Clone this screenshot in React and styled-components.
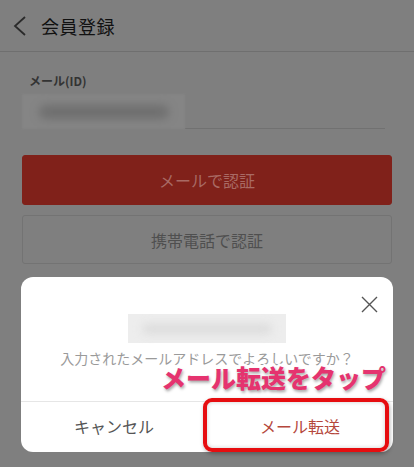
import React from 'react'
import styled, { createGlobalStyle } from 'styled-components'

const Global = createGlobalStyle`
  html, body {
    margin: 0;
    padding: 0;
    background: #7f7f7f;
  }
  body {
    font-family: "Noto Sans CJK JP", "Noto Sans", sans-serif;
  }
`

const Page = styled.div`
  position: relative;
  width: 414px;
  height: 467px;
  overflow: hidden;
  background: #7f7f7f;
`

const Header = styled.div`
  height: 52px;
  display: flex;
  align-items: center;
  gap: 12px;
  padding-left: 13px;
  border-bottom: 1px solid #6f6f6f;
  box-sizing: border-box;
`

const Title = styled.div`
  font-size: 18px;
  color: #111;
  letter-spacing: 0.5px;
`

const Form = styled.div`
  padding: 22px 22px 0;
`

const Label = styled.div`
  font-size: 12px;
  font-weight: 700;
  color: #333;
  padding-left: 7px;
  line-height: 14px;
`

const InputRow = styled.div`
  display: flex;
  align-items: flex-end;
  margin-top: 6px;
  height: 35px;
  padding-right: 7px;
`

const Blurred = styled.div`
  width: 163px;
  height: 35px;
  background: #858585;
  display: flex;
  align-items: center;
  justify-content: center;
  flex-shrink: 0;
  filter: blur(1px);
`

const Blob = styled.div`
  width: ${p => p.$w}px;
  height: ${p => p.$h}px;
  border-radius: 10px;
  background: ${p => p.$c};
  filter: blur(4px);
`

const Underline = styled.div`
  flex: 1;
  border-bottom: 1px solid #717171;
`

const Button = styled.div`
  margin-top: ${p => p.$mt}px;
  height: ${p => p.$h}px;
  border-radius: 3px;
  box-sizing: border-box;
  display: flex;
  align-items: center;
  justify-content: center;
  font-size: 16px;
  background: ${p => (p.$primary ? '#80211a' : '#7f7f7f')};
  border: 1px solid ${p => (p.$primary ? '#80211a' : '#737373')};
  color: ${p => (p.$primary ? '#a96a64' : '#4f4f4f')};
`

const Modal = styled.div`
  position: absolute;
  left: 21px;
  top: 277px;
  width: 372px;
  height: 175px;
  background: #fff;
  border-radius: 12px;
  display: flex;
  flex-direction: column;
`

const Close = styled.div`
  position: absolute;
  right: 15px;
  top: 17px;
  width: 17px;
  height: 17px;
`

const ModalBody = styled.div`
  height: 125px;
  display: flex;
  flex-direction: column;
  align-items: center;
  padding-top: 37px;
  box-sizing: border-box;
  border-bottom: 1px solid #e6e6e6;
`

const ModalBlur = styled.div`
  width: 158px;
  height: 29px;
  background: #ededed;
  display: flex;
  align-items: center;
  justify-content: center;
`

const Question = styled.div`
  margin-top: 6px;
  font-size: 14px;
  color: #9a9a9a;
  line-height: 18px;
`

const Actions = styled.div`
  flex: 1;
  display: grid;
  grid-template-columns: 1fr 1fr;
`

const Action = styled.div`
  display: flex;
  align-items: center;
  justify-content: center;
  font-size: 16px;
  color: ${p => (p.$accent ? '#b5473c' : '#555')};
  padding-bottom: 2px;
`

const Callout = styled.div`
  position: absolute;
  right: 28px;
  top: 359px;
  font-size: 25px;
  font-weight: 900;
  color: #e5336f;
  -webkit-text-stroke: 5px #fff;
  paint-order: stroke fill;
  text-shadow: 1px 2px 3px rgba(0, 0, 0, 0.35);
  white-space: nowrap;
`

const Highlight = styled.div`
  position: absolute;
  left: 203px;
  top: 398px;
  width: 186px;
  height: 54px;
  box-sizing: border-box;
  border: 4px solid #e60d10;
  border-radius: 9px;
  box-shadow: 1px 2px 4px rgba(0, 0, 0, 0.3), inset 0 0 4px rgba(0, 0, 0, 0.2);
`

const App = () => {
  return (
    <>
      <Global />
      <Page>
        <Header>
          <svg width="16" height="24" viewBox="0 0 16 24">
            <path d="M12 3 L2 12 L12 21" fill="none" stroke="#2a2a2a" strokeWidth="1.8" />
          </svg>
          <Title>会員登録</Title>
        </Header>
        <Form>
          <Label>メール(ID)</Label>
          <InputRow>
            <Blurred>
              <Blob $w={130} $h={14} $c="#6f6f6f" />
            </Blurred>
            <Underline />
          </InputRow>
          <Button $primary $mt={26} $h={50}>メールで認証</Button>
          <Button $mt={10} $h={49}>携帯電話で認証</Button>
        </Form>
        <Modal>
          <Close>
            <svg width="17" height="17" viewBox="0 0 17 17">
              <path d="M1 1 L16 16 M16 1 L1 16" stroke="#555" strokeWidth="1.4" />
            </svg>
          </Close>
          <ModalBody>
            <ModalBlur>
              <Blob $w={130} $h={10} $c="#dcdcdc" />
            </ModalBlur>
            <Question>入力されたメールアドレスでよろしいですか？</Question>
          </ModalBody>
          <Actions>
            <Action>キャンセル</Action>
            <Action $accent>メール転送</Action>
          </Actions>
        </Modal>
        <Callout>メール転送をタップ</Callout>
        <Highlight />
      </Page>
    </>
  )
}

export default App
